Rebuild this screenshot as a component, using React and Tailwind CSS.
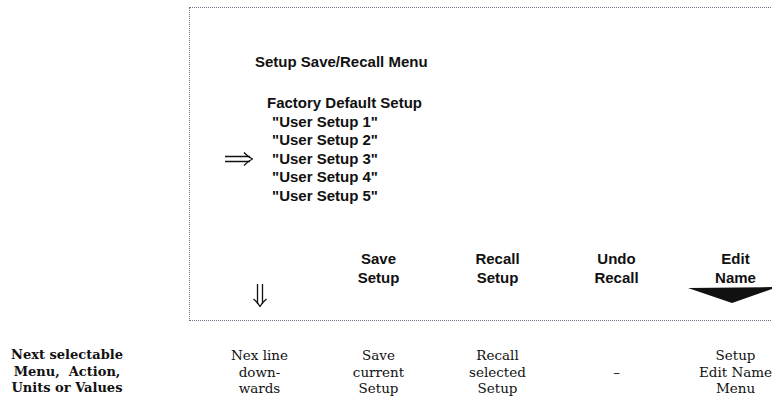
import React from "react";

const sans = { fontFamily: '"Liberation Sans", Arial, sans-serif' };
const serif = { fontFamily: '"DejaVu Serif", "Liberation Serif", serif' };

function RightArrow() {
  return (
    <svg width="28" height="14" viewBox="0 0 28 14" className="block">
      <path d="M0 4.5 H25 M0 9.5 H25" stroke="#111" strokeWidth="1.3" fill="none" />
      <path d="M19 0.5 Q23 5 27.5 7 Q23 9 19 13.5" stroke="#111" strokeWidth="1.3" fill="none" />
    </svg>
  );
}

function DownArrow() {
  return (
    <svg width="14" height="23" viewBox="0 0 14 23" className="block">
      <path d="M4.5 0 V20 M9.5 0 V20" stroke="#111" strokeWidth="1.3" fill="none" />
      <path d="M0.5 15 Q5 18.5 7 22.5 Q9 18.5 13.5 15" stroke="#111" strokeWidth="1.3" fill="none" />
    </svg>
  );
}

const users = ["User Setup 1", "User Setup 2", "User Setup 3", "User Setup 4", "User Setup 5"];

export default function App() {
  return (
    <div className="w-[772px] h-[404px] bg-white overflow-hidden text-[#111]">
      <div className="ml-[189px] mt-[7px] h-[314px] w-[700px] border-l border-t border-b border-dotted border-gray-500 flex flex-col">
        <div className="pl-[65px] pt-[45px] font-bold text-[15px] leading-[18.5px]" style={sans}>
          Setup Save/Recall Menu
        </div>
        <div className="mt-[22.5px] font-bold text-[15px] leading-[18.5px]" style={sans}>
          <div className="pl-[77px]">Factory Default Setup</div>
          {users.map((u, i) => (
            <div key={u} className="flex items-center">
              <div className="w-[82px] shrink-0 flex pl-[35px]">{i === 2 ? <RightArrow /> : null}</div>
              <div>&quot;{u}&quot;</div>
            </div>
          ))}
        </div>
        <div className="mt-auto pl-[10px] pb-[13px] grid grid-cols-[repeat(5,119px)] items-start font-bold text-[15px] leading-[19px]" style={sans}>
          <div className="flex justify-center self-end">
            <DownArrow />
          </div>
          <div className="text-center">Save<br />Setup</div>
          <div className="text-center">Recall<br />Setup</div>
          <div className="text-center">Undo<br />Recall</div>
          <div className="flex flex-col items-center">
            <div className="text-center">Edit<br />Name</div>
            <svg width="90" height="16" viewBox="0 0 90 16" className="block mt-[0.5px] mb-[4px] -translate-x-[3px]">
              <polygon points="0,1 90,0 44,16" fill="#111" />
            </svg>
          </div>
        </div>
      </div>
      <div className="flex mt-[26px] text-[13.5px] leading-[16.5px]" style={serif}>
        <div className="w-[134px] shrink-0 text-center font-bold text-[13px]">
          Next selectable<br />Menu,&nbsp; Action,<br />Units or Values
        </div>
        <div className="w-[66px] shrink-0" />
        <div className="grid grid-cols-[repeat(5,119px)] shrink-0">
          <div className="text-center">Nex line<br />down-<br />wards</div>
          <div className="text-center">Save<br />current<br />Setup</div>
          <div className="text-center">Recall<br />selected<br />Setup</div>
          <div className="text-center pt-[16.5px]">–</div>
          <div className="text-center">Setup<br />Edit Name<br />Menu</div>
        </div>
      </div>
    </div>
  );
}
